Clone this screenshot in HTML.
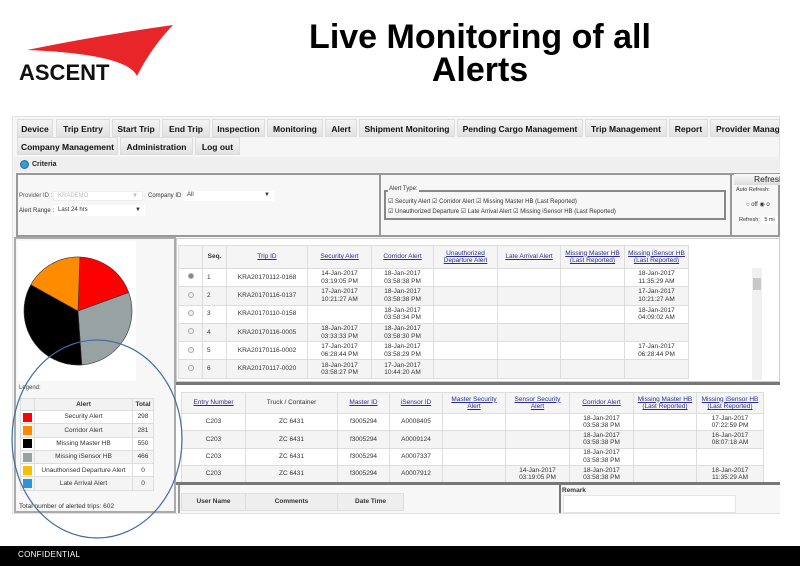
<!DOCTYPE html>
<html><head><meta charset="utf-8"><style>
*{box-sizing:border-box;margin:0;padding:0}
body{width:800px;height:566px;overflow:hidden;background:#fff;font-family:"Liberation Sans",sans-serif;position:relative;color:#222}
.a{position:absolute}
.title{left:250px;width:460px;top:21px;text-align:center;font-size:34px;font-weight:bold;line-height:33px;color:#000}
.nav{height:18px;background:linear-gradient(#f4f4f4,#e2e2e2);font-size:8.5px;font-weight:bold;color:#111;line-height:18px;text-align:center;border:1px solid #ddd}
.t{border-collapse:collapse;table-layout:fixed;font-size:6.5px;text-align:center;color:#333}
.t td{border:1px solid #ddd;line-height:7.5px;padding:0;overflow:hidden;white-space:nowrap}
.t tr.h td{background:#f5f5f5;color:#2a2a9a;text-decoration:underline}
.t tr.h td.n{color:#333;text-decoration:none;font-weight:bold}
.t tr.g td{background:#f4f4f4}
.rad{display:inline-block;width:6px;height:6px;border:1px solid #aaa;border-radius:50%;background:#eee}
.sw{display:inline-block;width:9px;height:9px;vertical-align:middle}
.sm{font-size:6px;color:#333}
</style></head><body>
<!-- logo -->
<svg class="a" style="left:15px;top:22px" width="165" height="65" viewBox="0 0 165 65">
<path d="M12 28 Q80 14 158 3 Q136 26 122 54 Q112 32 12 28 Z" fill="#e8262a"/>
<text x="4" y="58" font-family="Liberation Sans" font-weight="bold" font-size="22" fill="#111">ASCENT</text>
</svg>
<div class="a title">Live Monitoring of all<br>Alerts</div>

<!-- app frame -->
<div class="a" style="left:12px;top:116px;width:768px;height:398px;background:#f6f6f6;border:1px solid #e2e2e2"></div>
<div class="a nav" style="left:17px;top:119px;width:36px">Device</div>
<div class="a nav" style="left:56px;top:119px;width:54px">Trip Entry</div>
<div class="a nav" style="left:112px;top:119px;width:48px">Start Trip</div>
<div class="a nav" style="left:162px;top:119px;width:48px">End Trip</div>
<div class="a nav" style="left:212px;top:119px;width:53px">Inspection</div>
<div class="a nav" style="left:267px;top:119px;width:56px">Monitoring</div>
<div class="a nav" style="left:325px;top:119px;width:32px">Alert</div>
<div class="a nav" style="left:359px;top:119px;width:96px">Shipment Monitoring</div>
<div class="a nav" style="left:457px;top:119px;width:126px">Pending Cargo Management</div>
<div class="a nav" style="left:585px;top:119px;width:82px">Trip Management</div>
<div class="a nav" style="left:669px;top:119px;width:39px">Report</div>
<div class="a nav" style="left:710px;top:119px;width:70px;text-align:left;padding-left:5px;overflow:hidden;white-space:nowrap">Provider Management</div>
<div class="a nav" style="left:17px;top:137px;width:101px">Company Management</div>
<div class="a nav" style="left:120px;top:137px;width:73px">Administration</div>
<div class="a nav" style="left:195px;top:137px;width:45px">Log out</div>
<div class="a" style="left:14px;top:157px;width:766px;height:15px;background:#efefef"></div>
<div class="a" style="left:20px;top:160px;width:9px;height:9px;border-radius:50%;background:#3a9ad0;border:1px solid #1d6ea0"></div>
<div class="a" style="left:32px;top:161px;font-size:7px;font-weight:bold">Criteria</div>
<div class="a" style="left:16px;top:173px;width:764px;height:64px;border:2px solid #999;background:#f7f7f7"></div>
<div class="a" style="left:379px;top:173px;width:2px;height:64px;background:#999"></div>
<div class="a" style="left:730px;top:173px;width:2px;height:64px;background:#999"></div>
<div class="a sm" style="left:19px;top:193px;color:#555">Provider ID :</div>
<div class="a sm" style="left:53px;top:191px;width:90px;height:10px;background:#fff;border:1px solid #eee;color:#bbb;padding-left:4px;line-height:9px">KRADEMO <span style="float:right;margin-right:4px">▼</span></div>
<div class="a sm" style="left:148px;top:193px">Company ID :</div>
<div class="a sm" style="left:183px;top:191px;width:91px;height:10px;background:#fff;padding-left:4px;line-height:9px">All<span style="float:right;margin-right:4px">▼</span></div>
<div class="a sm" style="left:19px;top:208px">Alert Range :</div>
<div class="a sm" style="left:54px;top:205px;width:91px;height:11px;background:#fff;padding-left:4px;line-height:10px">Last 24 hrs<span style="float:right;margin-right:4px">▼</span></div>
<div class="a" style="left:384px;top:190px;width:342px;height:30px;border:2px solid #888"></div>
<div class="a sm" style="left:388px;top:186px;background:#f7f7f7;padding:0 1px">Alert Type:</div>
<div class="a sm" style="left:388px;top:198px">☑ Security Alert ☑ Corridor Alert ☑ Missing Master HB (Last Reported)</div>
<div class="a sm" style="left:388px;top:208px">☑ Unauthorized Departure ☑ Late Arrival Alert ☑ Missing iSensor HB (Last Reported)</div>
<div class="a" style="left:734px;top:174px;width:46px;height:11px;background:linear-gradient(#fafafa,#ddd);font-size:8.5px;padding-left:20px;overflow:hidden;white-space:nowrap">Refresh</div>
<div class="a sm" style="left:736px;top:187px;font-size:5.5px">Auto Refresh:</div>
<div class="a sm" style="left:746px;top:201px">○ off ◉ o</div>
<div class="a sm" style="left:739px;top:217px;font-size:5.5px">Refresh: <span style="background:#fff;padding:1px 3px">5 mi</span></div>

<!-- left panel -->
<div class="a" style="left:14px;top:237px;width:162px;height:276px;border:2px solid #aaa;background:#f7f7f7"></div>
<div class="a" style="left:18px;top:241px;width:118px;height:140px;background:#fff"></div>
<svg class="a" style="left:22px;top:255px" width="112" height="112" viewBox="-56 -56 112 112">
<g stroke="#333" stroke-width="0.6">
<path d="M0 0 L1.9 -54 A54 54 0 0 1 50.7 -18.5 Z" fill="#ff0000"/>
<path d="M0 0 L50.7 -18.5 A54 54 0 0 1 3.8 53.9 Z" fill="#98a2a2"/>
<path d="M0 0 L3.8 53.9 A54 54 0 0 1 -47.2 -26.2 Z" fill="#000"/>
<path d="M0 0 L-47.2 -26.2 A54 54 0 0 1 1.9 -54 Z" fill="#ff8c00"/>
</g></svg>
<div class="a sm" style="left:19px;top:385px;color:#444">Legend:</div>
<table class="a t" style="left:20px;top:398px;width:133px;font-size:6.5px;background:#fff">
<colgroup><col style="width:14px"><col style="width:98px"><col style="width:21px"></colgroup>
<tr style="height:12px;background:#f2f2f2"><td></td><td style="font-weight:bold">Alert</td><td style="font-weight:bold">Total</td></tr>
<tr style="height:13.3px"><td><span class="sw" style="background:#f00"></span></td><td>Security Alert</td><td>298</td></tr>
<tr style="height:13.3px;background:#f4f4f4"><td><span class="sw" style="background:#ff8a00"></span></td><td>Corridor Alert</td><td>281</td></tr>
<tr style="height:13.3px"><td><span class="sw" style="background:#000"></span></td><td>Missing Master HB</td><td>550</td></tr>
<tr style="height:13.3px;background:#f4f4f4"><td><span class="sw" style="background:#98a2a2"></span></td><td>Missing iSensor HB</td><td>466</td></tr>
<tr style="height:13.3px"><td><span class="sw" style="background:#f5c000"></span></td><td>Unauthorised Departure Alert</td><td>0</td></tr>
<tr style="height:13.3px;background:#f4f4f4"><td><span class="sw" style="background:#2d94d8"></span></td><td>Late Arrival Alert</td><td>0</td></tr>
</table>
<div class="a sm" style="left:19px;top:503px;font-size:6.5px">Total number of alerted trips: 602</div>

<!-- top table -->
<div class="a" style="left:176px;top:238px;width:604px;height:144px;background:#fff;border:1px solid #ccc"></div>
<table class="a t" style="left:178px;top:245px;width:510px">
<colgroup><col style="width:24px"><col style="width:24px"><col style="width:81px"><col style="width:64px"><col style="width:62px"><col style="width:64px"><col style="width:63px"><col style="width:64px"><col style="width:64px"></colgroup>
<tr class="h" style="height:23px"><td class="n"></td><td class="n">Seq.</td><td>Trip ID</td><td>Security Alert</td><td>Corridor Alert</td><td>Unauthorized<br>Departure Alert</td><td>Late Arrival Alert</td><td>Missing Master HB<br>(Last Reported)</td><td>Missing iSensor HB<br>(Last Reported)</td></tr>
<tr style="height:18.3px"><td><span class="rad" style="background:#888"></span></td><td style="text-align:left;padding-left:4px">1</td><td>KRA20170112-0168</td><td>14-Jan-2017<br>03:19:05 PM</td><td>18-Jan-2017<br>03:58:38 PM</td><td></td><td></td><td></td><td>18-Jan-2017<br>11:35:29 AM</td></tr>
<tr class="g" style="height:18.3px"><td><span class="rad"></span></td><td style="text-align:left;padding-left:4px">2</td><td>KRA20170116-0137</td><td>17-Jan-2017<br>10:21:27 AM</td><td>18-Jan-2017<br>03:58:38 PM</td><td></td><td></td><td></td><td>17-Jan-2017<br>10:21:27 AM</td></tr>
<tr style="height:18.3px"><td><span class="rad"></span></td><td style="text-align:left;padding-left:4px">3</td><td>KRA20170110-0158</td><td></td><td>18-Jan-2017<br>03:58:34 PM</td><td></td><td></td><td></td><td>18-Jan-2017<br>04:09:02 AM</td></tr>
<tr class="g" style="height:18.3px"><td><span class="rad"></span></td><td style="text-align:left;padding-left:4px">4</td><td>KRA20170116-0005</td><td>18-Jan-2017<br>03:33:33 PM</td><td>18-Jan-2017<br>03:58:30 PM</td><td></td><td></td><td></td><td></td></tr>
<tr style="height:18.3px"><td><span class="rad"></span></td><td style="text-align:left;padding-left:4px">5</td><td>KRA20170116-0002</td><td>17-Jan-2017<br>06:28:44 PM</td><td>18-Jan-2017<br>03:58:29 PM</td><td></td><td></td><td></td><td>17-Jan-2017<br>06:28:44 PM</td></tr>
<tr class="g" style="height:18.3px"><td><span class="rad"></span></td><td style="text-align:left;padding-left:4px">6</td><td>KRA20170117-0020</td><td>18-Jan-2017<br>03:58:27 PM</td><td>17-Jan-2017<br>10:44:20 AM</td><td></td><td></td><td></td><td></td></tr>
</table>
<div class="a" style="left:752px;top:268px;width:10px;height:112px;background:#f0f0f0"></div>
<div class="a" style="left:753px;top:278px;width:8px;height:12px;background:#c8c8c8"></div>

<!-- bottom table -->
<div class="a" style="left:176px;top:382px;width:604px;height:3px;background:#777"></div>
<div class="a" style="left:176px;top:385px;width:604px;height:97px;background:#fff"></div>
<table class="a t" style="left:181px;top:392px;width:582px">
<colgroup><col style="width:64px"><col style="width:92px"><col style="width:52px"><col style="width:53px"><col style="width:63px"><col style="width:64px"><col style="width:64px"><col style="width:63px"><col style="width:67px"></colgroup>
<tr class="h" style="height:21px"><td>Entry Number</td><td class="n" style="font-weight:normal">Truck / Container</td><td>Master ID</td><td>iSensor ID</td><td>Master Security<br>Alert</td><td>Sensor Security<br>Alert</td><td>Corridor Alert</td><td>Missing Master HB<br>(Last Reported)</td><td>Missing iSensor HB<br>(Last Reported)</td></tr>
<tr style="height:17.3px"><td>C203</td><td>ZC 6431</td><td>f3005294</td><td>A0008405</td><td></td><td></td><td>18-Jan-2017<br>03:58:38 PM</td><td></td><td>17-Jan-2017<br>07:22:59 PM</td></tr>
<tr class="g" style="height:17.3px"><td>C203</td><td>ZC 6431</td><td>f3005294</td><td>A0009124</td><td></td><td></td><td>18-Jan-2017<br>03:58:38 PM</td><td></td><td>16-Jan-2017<br>08:07:18 AM</td></tr>
<tr style="height:17.3px"><td>C203</td><td>ZC 6431</td><td>f3005294</td><td>A0007337</td><td></td><td></td><td>18-Jan-2017<br>03:58:38 PM</td><td></td><td></td></tr>
<tr class="g" style="height:17.3px"><td>C203</td><td>ZC 6431</td><td>f3005294</td><td>A0007912</td><td></td><td>14-Jan-2017<br>03:19:05 PM</td><td>18-Jan-2017<br>03:58:38 PM</td><td></td><td>18-Jan-2017<br>11:35:29 AM</td></tr>
</table>
<div class="a" style="left:176px;top:482px;width:604px;height:3px;background:#777"></div>
<div class="a" style="left:176px;top:485px;width:604px;height:28px;background:#f7f7f7"></div>
<div class="a" style="left:178px;top:485px;width:2px;height:28px;background:#999"></div>
<table class="a t" style="left:181px;top:493px;width:222px;font-weight:bold;background:#eee">
<colgroup><col style="width:64px"><col style="width:92px"><col style="width:66px"></colgroup>
<tr style="height:17px"><td>User Name</td><td>Comments</td><td>Date Time</td></tr></table>
<div class="a" style="left:559px;top:485px;width:2px;height:28px;background:#777"></div>
<div class="a" style="left:562px;top:487px;font-size:6.5px;font-weight:bold;color:#333">Remark</div>
<div class="a" style="left:563px;top:495px;width:173px;height:18px;background:#fff;border:1px solid #e5e5e5"></div>

<!-- ellipse -->
<svg class="a" style="left:0;top:320px" width="200" height="230"><ellipse cx="97" cy="119" rx="85" ry="99" fill="none" stroke="#3f6e9e" stroke-width="1.2"/></svg>

<div class="a" style="left:0;top:546px;width:800px;height:20px;background:#000"></div>
<div class="a" style="left:18px;top:550px;color:#fff;font-size:8px;letter-spacing:0.3px">CONFIDENTIAL</div>
</body></html>
